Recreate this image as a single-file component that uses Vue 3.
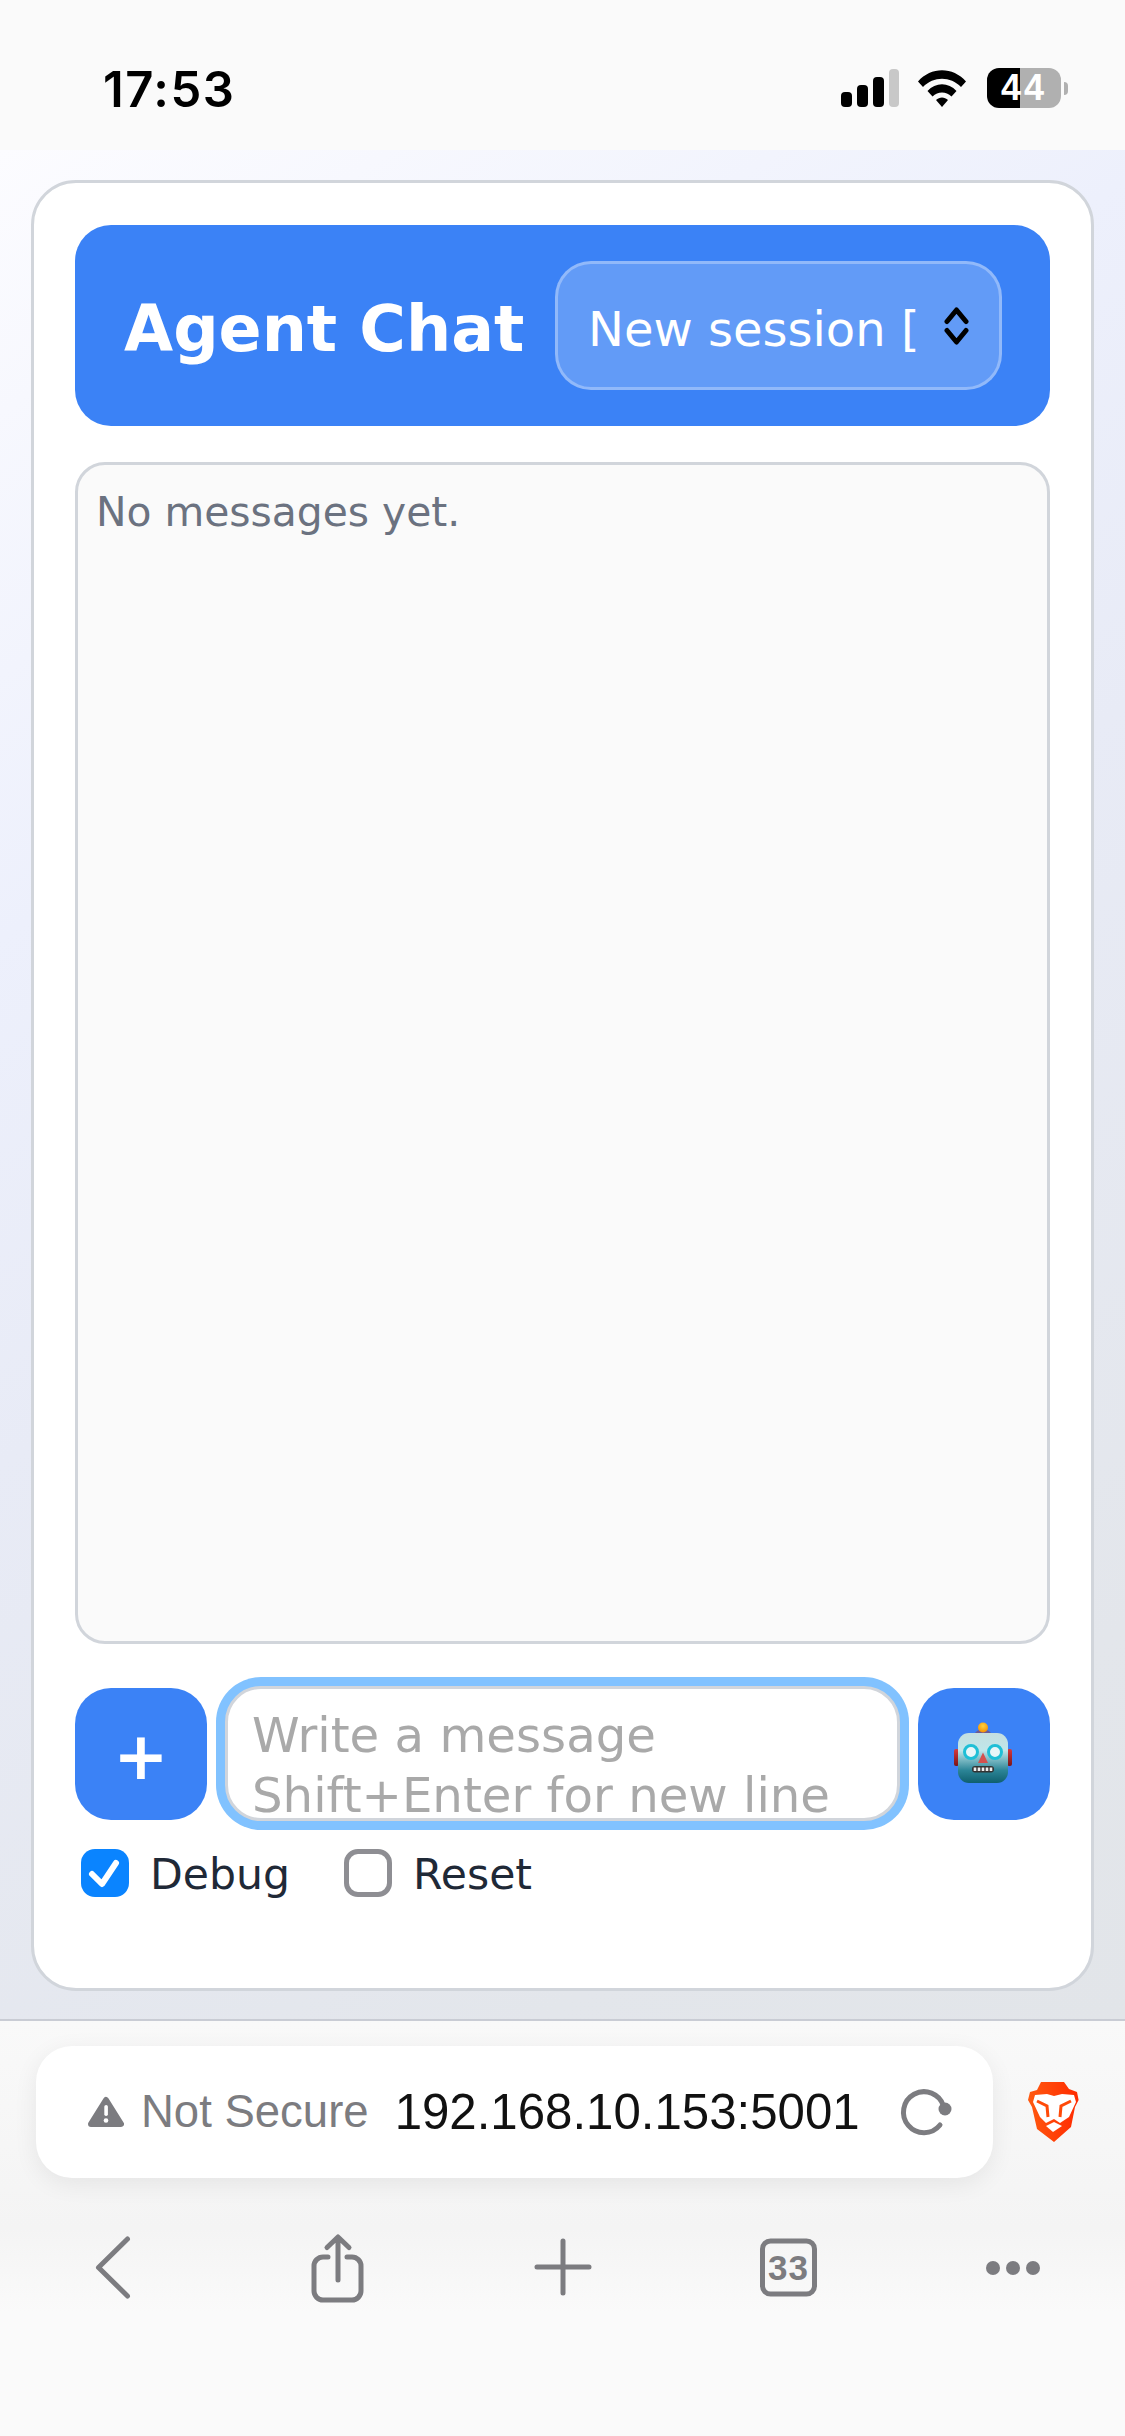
<script setup>
const toolbarItems = ['back', 'share', 'add', 'tabs', 'more']
</script>

<template>
  <div class="screen">
    <header class="status">
      <span class="time">17:53</span>
      <div class="status-icons">
        <svg class="signal" width="60" height="38" viewBox="0 0 60 38">
          <rect x="0" y="23" width="11" height="15" rx="4" fill="#000" />
          <rect x="16" y="16" width="11" height="22" rx="4" fill="#000" />
          <rect x="32" y="8" width="11" height="30" rx="4" fill="#000" />
          <rect x="48" y="0" width="10" height="38" rx="4" fill="#c8c8c8" />
        </svg>
        <svg class="wifi" width="50" height="38" viewBox="0 0 50 38">
          <path d="M1 12.5C14 -2.5 36 -2.5 49 12.5L44 18C33.500 7 16.500 7 6 18Z" fill="#000" />
          <path d="M10.500 22C18.500 13 31.500 13 39.500 22L34.500 27.500C29 22 21 22 15.500 27.500Z" fill="#000" />
          <path d="M19 31C22.500 27.500 27.500 27.500 31 31L25 38Z" fill="#000" />
        </svg>
        <div class="battery">
          <span class="battery-num">44</span>
        </div>
        <span class="battery-nub"></span>
      </div>
    </header>

    <main class="page">
      <section class="card">
        <div class="chat-head">
          <h1 class="title">Agent Chat</h1>
          <div class="session" role="combobox">
            <span class="session-text">New session [</span>
            <svg class="session-arrows" width="25" height="40" viewBox="0 0 25 40">
              <path d="M3 15.500L12.500 4L22 15.500M3 24.500L12.500 36L22 24.500" fill="none" stroke="#000" stroke-width="5" stroke-linecap="round" stroke-linejoin="round" />
            </svg>
          </div>
        </div>

        <div class="messages">No messages yet.</div>

        <div class="composer">
          <button class="square-btn plus" type="button">+</button>
          <div class="input" role="textbox">
            <span class="ph">Write a message</span>
            <span class="ph">Shift+Enter for new line</span>
          </div>
          <button class="square-btn" type="button" aria-label="Send">
            <svg width="68" height="68" viewBox="950 1720 68 68">
              <defs>
                <linearGradient id="head" x1="0" y1="0" x2="0" y2="1">
                  <stop offset="0" stop-color="#c4dfe0" />
                  <stop offset="0.35" stop-color="#bfe6ea" />
                  <stop offset="0.75" stop-color="#2b8496" />
                  <stop offset="1" stop-color="#0f5f6e" />
                </linearGradient>
                <linearGradient id="ear" x1="0" y1="0" x2="0" y2="1">
                  <stop offset="0" stop-color="#d8393b" />
                  <stop offset="1" stop-color="#7a1518" />
                </linearGradient>
                <radialGradient id="ball" cx="0.5" cy="0.35" r="0.7">
                  <stop offset="0" stop-color="#ffd23c" />
                  <stop offset="1" stop-color="#f28a00" />
                </radialGradient>
              </defs>
              <rect x="954" y="1749" width="5" height="17" rx="2" fill="url(#ear)" />
              <rect x="1007" y="1749" width="5" height="17" rx="2" fill="url(#ear)" />
              <ellipse cx="983" cy="1734" rx="8" ry="4.500" fill="#6b5b95" />
              <circle cx="983" cy="1727.500" r="5" fill="url(#ball)" />
              <rect x="958" y="1733" width="50" height="50" rx="11" fill="url(#head)" />
              <circle cx="971" cy="1752" r="6.500" fill="#e8f6f8" stroke="#1fbfd6" stroke-width="3" />
              <circle cx="995" cy="1752" r="6.500" fill="#e8f6f8" stroke="#1fbfd6" stroke-width="3" />
              <path d="M983 1752.500L988 1763H978Z" fill="#d4504e" />
              <rect x="972" y="1766" width="22" height="6.500" rx="3" fill="#333" />
              <path d="M975 1767.500v3.500M979 1767.500v3.500M983 1767.500v3.500M987 1767.500v3.500M991 1767.500v3.500" stroke="#eee" stroke-width="2.600" />
            </svg>
          </button>
        </div>

        <div class="options">
          <label class="opt">
            <span class="box on">
              <svg width="48" height="48" viewBox="0 0 48 48">
                <path d="M11 25L21 35L35 14" fill="none" stroke="#fff" stroke-width="6" stroke-linecap="round" stroke-linejoin="round" />
              </svg>
            </span>
            <span class="opt-text">Debug</span>
          </label>
          <label class="opt">
            <span class="box"></span>
            <span class="opt-text">Reset</span>
          </label>
        </div>
      </section>
    </main>

    <footer class="browser">
      <div class="url-row">
        <div class="url-bar">
          <svg class="warn" width="36" height="32" viewBox="0 0 36 32">
            <path d="M18 4L33 28H3Z" fill="#7c7c80" stroke="#7c7c80" stroke-width="6" stroke-linejoin="round" />
            <rect x="16.300" y="9" width="3.600" height="11" rx="1.800" fill="#fff" />
            <circle cx="18" cy="24.500" r="2.300" fill="#fff" />
          </svg>
          <span class="not-secure">Not Secure</span>
          <span class="address">192.168.10.153:5001</span>
          <svg class="reload" width="54" height="52" viewBox="0 0 54 52">
            <path d="M44.500 20A20.500 20.500 0 1 0 41 39" fill="none" stroke="#7c7c80" stroke-width="5" stroke-linecap="round" />
            <circle cx="46" cy="23" r="6.500" fill="#7c7c80" />
          </svg>
        </div>
        <svg class="brave" width="51" height="60" viewBox="0 0 51 60">
          <defs>
            <linearGradient id="brave" x1="0" y1="0" x2="1" y2="0">
              <stop offset="0" stop-color="#ff5a10" />
              <stop offset="1" stop-color="#ff2a00" />
            </linearGradient>
          </defs>
          <path d="M13 0H36L41 7L49 10L50.600 18L47 25L43 45L26 60L9 47L4 25L0 18L2 10L9 8Z" fill="url(#brave)" />
          <path d="M7 13L19 12L26 14L34 12L46 13L48 20L41 35L32 41L26 37L18 41L12 35L5 20Z" fill="#fff" />
          <path d="M9 19L19 24L20 35M43 19L33 24L32 35" fill="none" stroke="#ff4a08" stroke-width="3" />
          <path d="M26 40L34 44L25 50L18 44Z" fill="#fff" />
        </svg>
      </div>

      <nav class="tools">
        <div v-for="item in toolbarItems" :key="item" class="tool">
          <svg width="80" height="80" viewBox="0 0 80 80" fill="none" stroke="#7c7c80" stroke-width="5" stroke-linecap="round" stroke-linejoin="round">
            <path v-if="item === 'back'" d="M54.500 11L25.500 39.500L54.500 68" />
            <g v-else-if="item === 'share'">
              <path d="M30 29H25a9 9 0 0 0-9 9v25a9 9 0 0 0 9 9h29a9 9 0 0 0 9-9V38a9 9 0 0 0-9-9h-5" />
              <path d="M40 52V10M29 19.500L40 9L51 19.500" />
            </g>
            <path v-else-if="item === 'add'" d="M14 39H66M40 13V65" />
            <g v-else-if="item === 'tabs'">
              <rect x="14.500" y="13" width="52" height="53" rx="8" />
              <text x="40.500" y="51.500" text-anchor="middle" class="tab-count">33</text>
            </g>
            <g v-else fill="#7c7c80" stroke="none">
              <circle cx="20" cy="40" r="7" />
              <circle cx="40" cy="40" r="7" />
              <circle cx="60" cy="40" r="7" />
            </g>
          </svg>
        </div>
      </nav>
    </footer>
  </div>
</template>

<style scoped>
.screen {
  width: 1125px;
  height: 2436px;
  display: flex;
  flex-direction: column;
  overflow: hidden;
  background: #fafafa;
  font-family: "DejaVu Sans", sans-serif;
}

.status {
  height: 150px;
  flex: none;
  display: flex;
  align-items: center;
  justify-content: space-between;
  background: #fafafa;
  padding: 0 57px 0 103px;
  box-sizing: border-box;
}

.time {
  font: 600 49px/1 Inter, "Liberation Sans", sans-serif;
  letter-spacing: 1.500px;
  color: #000;
  margin-top: 28px;
}

.status-icons {
  display: flex;
  align-items: center;
  margin-top: 26px;
}

.signal { margin-right: 16px; }
.wifi { margin-right: 20px; }

.battery {
  width: 74px;
  height: 40px;
  border-radius: 12px;
  background: linear-gradient(90deg, #000 44.500%, #b0b0b0 44.500%);
  display: flex;
  align-items: center;
  justify-content: center;
}

.battery-num {
  font: 700 36px/1 "Liberation Sans", sans-serif;
  letter-spacing: 3px;
  color: #fff;
}

.battery-nub {
  width: 4px;
  height: 13px;
  margin-left: 3px;
  background: #b0b0b0;
  border-radius: 0 6px 6px 0;
}

.page {
  height: 1871px;
  flex: none;
  box-sizing: border-box;
  padding: 30px 31px 28px;
  background: linear-gradient(146deg, #fcfcff 0%, #edf0fc 30%, #e8ebf6 50%, #e3e6eb 85%, #e2e5e9 100%);
  border-bottom: 2px solid #c9ccd4;
}

.card {
  height: 100%;
  box-sizing: border-box;
  background: #fff;
  border: 3px solid #d1d5db;
  border-radius: 45px;
  padding: 42px 41px 0;
  display: flex;
  flex-direction: column;
}

.chat-head {
  height: 201px;
  flex: none;
  background: #3b82f6;
  border-radius: 36px;
  display: flex;
  align-items: center;
  padding: 0 48px 0 49px;
  justify-content: space-between;
}

.title {
  margin: 6px 0 0;
  font-size: 63.500px;
  font-weight: 700;
  color: #fff;
  white-space: nowrap;
}

.session {
  width: 447px;
  height: 129px;
  box-sizing: border-box;
  border: 3px solid rgba(255, 255, 255, 0.3);
  background: rgba(255, 255, 255, 0.2);
  border-radius: 36px;
  display: flex;
  align-items: center;
  justify-content: space-between;
  padding: 0 30px;
  color: #fff;
  font-size: 48px;
}

.session-text {
  white-space: nowrap;
  padding-top: 6px;
}

.messages {
  height: 1182px;
  flex: none;
  margin-top: 36px;
  box-sizing: border-box;
  background: #fafafa;
  border: 3px solid #d1d5db;
  border-radius: 30px;
  padding: 18px;
  color: #6b7280;
  font-size: 40.800px;
  line-height: 58px;
}

.composer {
  margin-top: 42px;
  display: flex;
  align-items: center;
  gap: 18px;
  flex: none;
}

.square-btn {
  width: 132px;
  height: 132px;
  flex: none;
  border: 0;
  padding: 0;
  background: #3b82f6;
  border-radius: 36px;
  color: #fff;
  display: flex;
  align-items: center;
  justify-content: center;
  font-family: "DejaVu Sans", sans-serif;
}

.plus {
  font-size: 66px;
  font-weight: 700;
  line-height: 1;
  padding-top: 6px;
}

.input {
  flex: 1;
  height: 135px;
  box-sizing: border-box;
  border: 3px solid #d1d5db;
  border-radius: 36px;
  background: #fff;
  box-shadow: 0 0 0 9px #81c2ff;
  padding: 16px 24px 0;
  display: flex;
  flex-direction: column;
}

.ph {
  font-size: 48.200px;
  line-height: 60px;
  color: #a9a9a9;
  white-space: nowrap;
}

.options {
  margin-top: 27px;
  padding-left: 6px;
  display: flex;
  gap: 54px;
  flex: none;
}

.opt {
  display: flex;
  align-items: center;
  gap: 21px;
  font-size: 42.600px;
  color: #1f2937;
  line-height: 48px;
}

.opt-text {
  padding-top: 2px;
}

.box {
  width: 48px;
  height: 48px;
  box-sizing: border-box;
  border: 5px solid #8e8e93;
  border-radius: 14px;
  display: block;
}

.box.on {
  border: 0;
  background: #0a84ff;
}

.box svg { display: block; }

.browser {
  flex: 1;
  background: linear-gradient(180deg, #f9f9f9 0%, #f4f4f4 50%, #fafafa 70%);
  padding-top: 25px;
  display: flex;
  flex-direction: column;
}

.url-row {
  display: flex;
  align-items: center;
  padding-left: 36px;
}

.url-bar {
  width: 957px;
  height: 132px;
  box-sizing: border-box;
  background: #fff;
  border-radius: 36px;
  box-shadow: 0 6px 24px rgba(0, 0, 0, 0.07);
  display: flex;
  align-items: center;
  padding-left: 52px;
}

.warn { margin-right: 17px; flex: none; }

.not-secure {
  font: 400 45.500px/1 "Liberation Sans", sans-serif;
  color: #7c7c80;
  margin-right: 26px;
  white-space: nowrap;
}

.address {
  font: 400 49.200px/1 "Liberation Sans", sans-serif;
  color: #111;
  white-space: nowrap;
}

.reload { margin-left: 39px; flex: none; }

.brave { margin-left: 35px; flex: none; }

.tools {
  margin-top: 50px;
  display: grid;
  grid-template-columns: repeat(5, 225px);
}

.tool {
  display: flex;
  justify-content: center;
}

.tab-count {
  font: 700 35px "Liberation Sans", sans-serif;
  fill: #7c7c80;
  stroke: none;
  letter-spacing: 1px;
}
</style>

<style>
html, body { margin: 0; padding: 0; }
</style>
